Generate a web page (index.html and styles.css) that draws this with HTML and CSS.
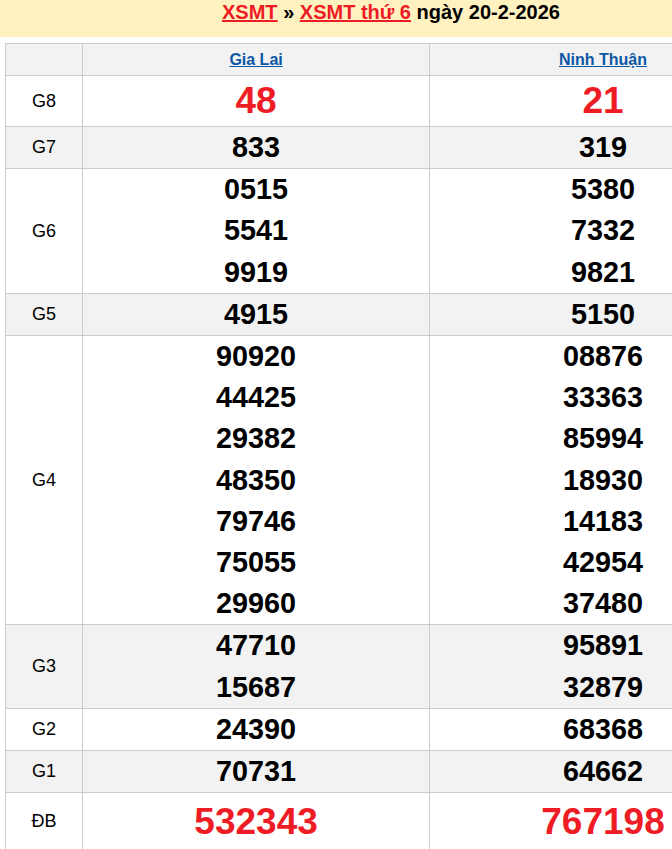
FILE: index.html
```html
<!DOCTYPE html>
<html lang="vi">
<head>
<meta charset="utf-8">
<title>XSMT thứ 6 ngày 20-2-2026</title>
<link rel="stylesheet" href="styles.css">
</head>
<body>
<div class="page">
  <h2 class="title"><a href="#" class="title-link">XSMT</a> » <a href="#" class="title-link">XSMT thứ 6</a> ngày 20-2-2026</h2>
  <table class="results">
    <colgroup><col class="c-label"><col class="c-prov"><col class="c-prov"></colgroup>
    <thead>
      <tr class="shade head">
        <th></th>
        <th><a href="#" class="prov">Gia Lai</a></th>
        <th><a href="#" class="prov">Ninh Thuận</a></th>
      </tr>
    </thead>
    <tbody>
      <tr class="g8">
        <td class="lbl">G8</td>
        <td><div class="num big red">48</div></td>
        <td><div class="num big red">21</div></td>
      </tr>
      <tr class="shade">
        <td class="lbl">G7</td>
        <td><div class="num">833</div></td>
        <td><div class="num">319</div></td>
      </tr>
      <tr>
        <td class="lbl">G6</td>
        <td><div class="num">0515</div><div class="num">5541</div><div class="num">9919</div></td>
        <td><div class="num">5380</div><div class="num">7332</div><div class="num">9821</div></td>
      </tr>
      <tr class="shade">
        <td class="lbl">G5</td>
        <td><div class="num">4915</div></td>
        <td><div class="num">5150</div></td>
      </tr>
      <tr>
        <td class="lbl">G4</td>
        <td><div class="num">90920</div><div class="num">44425</div><div class="num">29382</div><div class="num">48350</div><div class="num">79746</div><div class="num">75055</div><div class="num">29960</div></td>
        <td><div class="num">08876</div><div class="num">33363</div><div class="num">85994</div><div class="num">18930</div><div class="num">14183</div><div class="num">42954</div><div class="num">37480</div></td>
      </tr>
      <tr class="shade">
        <td class="lbl">G3</td>
        <td><div class="num">47710</div><div class="num">15687</div></td>
        <td><div class="num">95891</div><div class="num">32879</div></td>
      </tr>
      <tr>
        <td class="lbl">G2</td>
        <td><div class="num">24390</div></td>
        <td><div class="num">68368</div></td>
      </tr>
      <tr class="shade">
        <td class="lbl">G1</td>
        <td><div class="num">70731</div></td>
        <td><div class="num">64662</div></td>
      </tr>
      <tr class="db">
        <td class="lbl">ĐB</td>
        <td><div class="num jackpot red">532343</div></td>
        <td><div class="num jackpot red">767198</div></td>
      </tr>
    </tbody>
  </table>
</div>
</body>
</html>
```
FILE: styles.css
```css
html {
  overflow: hidden;
}
body {
  margin: 0;
  font-family: "Liberation Sans", Arial, sans-serif;
  color: #000;
  background: #fff;
}
.page {
  width: 782px;
}
.title {
  margin: 0;
  background: #fff2c0;
  text-align: center;
  font-size: 20px;
  font-weight: bold;
  line-height: 23px;
  padding: 1px 0 13px;
  color: #000;
}
.title-link {
  color: #ee1c25;
  text-decoration: underline;
}
.results {
  width: 772px;
  margin: 6px 5px 0;
  border-collapse: collapse;
  table-layout: fixed;
}
.c-label {
  width: 10%;
}
.c-prov {
  width: 45%;
}
.results th,
.results td {
  border: 1px solid #cccccc;
  padding: 0;
  text-align: center;
  vertical-align: middle;
}
.shade {
  background: #f2f2f2;
}
.head th {
  height: 31px;
  font-size: 16px;
  font-weight: bold;
}
.prov {
  color: #0b57a4;
  text-decoration: underline;
}
.lbl {
  font-size: 18px;
}
.num {
  font-size: 28.8px;
  font-weight: bold;
  line-height: 41.2px;
}
.big {
  font-size: 37px;
  line-height: 50px;
}
.jackpot {
  font-size: 37px;
  line-height: 57px;
}
.red {
  color: #ee1c25;
}
```
